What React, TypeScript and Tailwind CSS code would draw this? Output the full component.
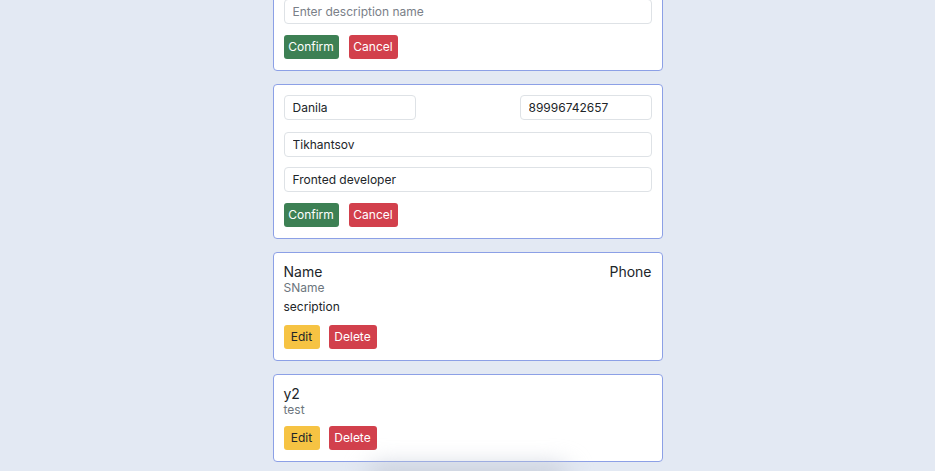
const font = { fontFamily: 'Inter, "Noto Sans", sans-serif' };

const Input = ({ value, placeholder, className = '' }: { value?: string; placeholder?: string; className?: string }) => (
  <input
    readOnly
    value={value}
    placeholder={placeholder}
    className={`h-[25px] rounded-[4px] border border-[#dee2e6] bg-white px-[8px] text-[12px] text-[#212529] placeholder:text-[#7a8088] outline-none ${className}`}
  />
);

const Btn = ({ label, kind, w }: { label: string; kind: 'ok' | 'cancel' | 'edit' | 'del'; w: string }) => {
  const colors = {
    ok: 'bg-[#3d8054] text-white',
    cancel: 'bg-[#d2404c] text-white',
    edit: 'bg-[#f6c343] text-[#212529]',
    del: 'bg-[#d2404c] text-white',
  }[kind];
  return (
    <button className={`h-[24px] ${w} rounded-[3px] text-[12px] leading-none ${colors}`}>{label}</button>
  );
};

const Card = ({ children, className = '' }: { children: React.ReactNode; className?: string }) => (
  <div className={`rounded-[4px] border border-[#8ca0e6] bg-white px-[10px] pt-[10px] pb-[11px] ${className}`}>{children}</div>
);

export default function App() {
  return (
    <div style={font} className="h-[471px] overflow-hidden bg-[#e3e9f3]">
      <div className="mx-auto flex w-[390px] flex-col gap-[13px]">
        <Card className="-mt-[12px] flex flex-col gap-[11px]">
          <Input placeholder="Enter description name" className="w-full" />
          <div className="flex gap-[10px]">
            <Btn label="Confirm" kind="ok" w="w-[55px]" />
            <Btn label="Cancel" kind="cancel" w="w-[49px]" />
          </div>
        </Card>

        <Card className="flex flex-col">
          <div className="flex justify-between">
            <Input value="Danila" className="w-[132px]" />
            <Input value="89996742657" className="w-[132px]" />
          </div>
          <Input value="Tikhantsov" className="mt-[12px] w-full" />
          <Input value="Fronted developer" className="mt-[10px] w-full" />
          <div className="mt-[11px] flex gap-[10px]">
            <Btn label="Confirm" kind="ok" w="w-[55px]" />
            <Btn label="Cancel" kind="cancel" w="w-[49px]" />
          </div>
        </Card>

        <Card>
          <div className="flex justify-between text-[14px] leading-[17px] text-[#212529]">
            <span>Name</span>
            <span>Phone</span>
          </div>
          <div className="text-[12px] leading-[15px] text-[#6c757d]">SName</div>
          <div className="mt-[4px] text-[12px] leading-[15px] text-[#212529]">secription</div>
          <div className="mt-[11px] flex gap-[9px]">
            <Btn label="Edit" kind="edit" w="w-[36px]" />
            <Btn label="Delete" kind="del" w="w-[48px]" />
          </div>
        </Card>

        <Card>
          <div className="text-[14px] leading-[17px] text-[#212529]">y2</div>
          <div className="text-[12px] leading-[15px] text-[#6c757d]">test</div>
          <div className="mt-[9px] flex gap-[9px]">
            <Btn label="Edit" kind="edit" w="w-[36px]" />
            <Btn label="Delete" kind="del" w="w-[48px]" />
          </div>
        </Card>
      </div>
      <div className="mx-auto mt-[5px] h-[20px] w-[200px] rounded-full bg-[#c3c9d6] blur-md" />
    </div>
  );
}
